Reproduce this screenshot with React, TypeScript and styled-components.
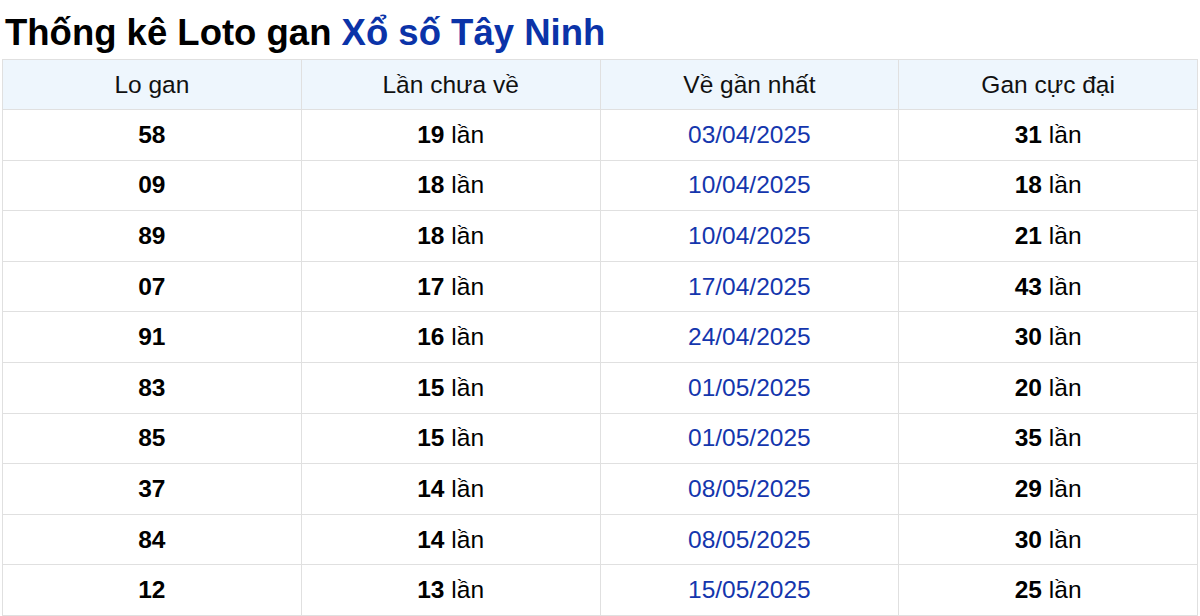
import React from "react";
import styled, { createGlobalStyle } from "styled-components";

const G = createGlobalStyle`
  body { margin: 0; background: #fff; font-family: "Liberation Sans", Arial, sans-serif; }
`;
const Wrap = styled.div`padding: 0 2px;`;
const Title = styled.h1`
  margin: 0; padding: 13px 0 0 3px; height: 59px; box-sizing: border-box;
  font-size: 36.5px; font-weight: bold; color: #000; line-height: 40px;
`;
const Blue = styled.span`color: #0b33a8;`;
const Table = styled.table`
  width: 1196px; border-collapse: collapse; table-layout: fixed; font-size: 24.5px;
`;
const Th = styled.th`
  background: #eef6fd; font-weight: normal; height: 47px; padding: 1px; border: 1px solid #e0e0e0; color: #111;
`;
const Td = styled.td<{ $blue?: boolean }>`
  height: 47.6px; padding: 1px; text-align: center; border: 1px solid #e0e0e0;
  color: ${(p) => (p.$blue ? "#1436ad" : "#000")};
`;
const rows = [
  ["58","19","03/04/2025","31"],["09","18","10/04/2025","18"],["89","18","10/04/2025","21"],
  ["07","17","17/04/2025","43"],["91","16","24/04/2025","30"],["83","15","01/05/2025","20"],
  ["85","15","01/05/2025","35"],["37","14","08/05/2025","29"],["84","14","08/05/2025","30"],
  ["12","13","15/05/2025","25"],
];
export default function App() {
  return (
    <Wrap>
      <G />
      <Title>Thống kê Loto gan <Blue>Xổ số Tây Ninh</Blue></Title>
      <Table>
        <thead><tr><Th>Lo gan</Th><Th>Lần chưa về</Th><Th>Về gần nhất</Th><Th>Gan cực đại</Th></tr></thead>
        <tbody>
          {rows.map((r) => (
            <tr key={r[0]}>
              <Td><b>{r[0]}</b></Td>
              <Td><b>{r[1]}</b> lần</Td>
              <Td $blue>{r[2]}</Td>
              <Td><b>{r[3]}</b> lần</Td>
            </tr>
          ))}
        </tbody>
      </Table>
    </Wrap>
  );
}
